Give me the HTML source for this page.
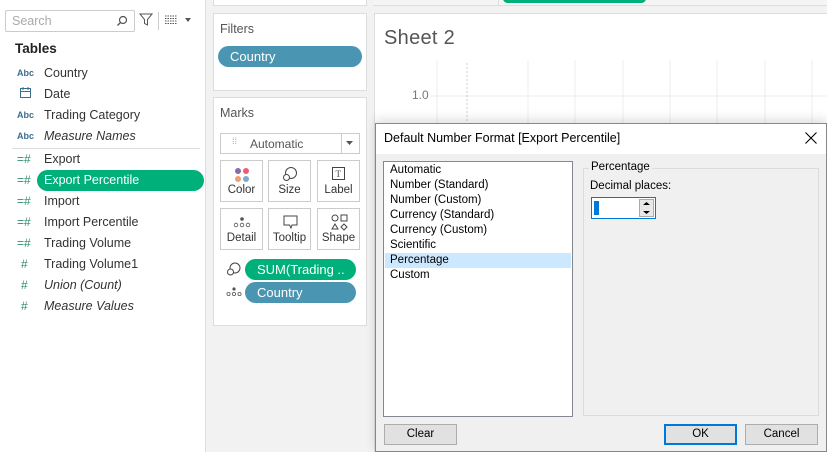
<!DOCTYPE html><html><head><style>
*{box-sizing:border-box;margin:0;padding:0}
html{width:827px;height:452px;overflow:hidden}
body{width:827px;height:452px;overflow:hidden;background:#f2f2f2;font-family:"Liberation Sans",sans-serif;position:relative;font-size:12px;color:#333}
.a{position:absolute}
.card{position:absolute;background:#fff;border:1px solid #ddd}
.pill{position:absolute;border-radius:11px;color:#fff;font-size:13px;padding-left:12px;line-height:21px;height:21px}
.fld{position:absolute;left:44px;font-size:12.5px;color:#333}
.ic{position:absolute;left:17px;font-size:9px;color:#3a6e8f;font-weight:bold}
.hash{position:absolute;left:17px;color:#2e8b6f;font-size:12px}
.mb{position:absolute;width:43px;height:42px;background:#fff;border:1px solid #ccc;text-align:center;font-size:11.5px}
.mb span{position:absolute;bottom:5px;left:0;right:0}
.li{position:absolute;left:390px;font-size:11.5px;color:#000}
.btn{position:absolute;top:424px;height:21px;background:#e1e1e1;border:1px solid #adadad;font-size:11.5px;text-align:center;line-height:19px;color:#000}
</style></head><body>
<div class="a" style="left:0;top:0;width:206px;height:452px;background:#fff;border-right:1px solid #ddd"></div>
<div class="a" style="left:5px;top:10px;width:130px;height:22px;border:1px solid #ccc;border-radius:2px"></div>
<div class="a" style="left:12px;top:14px;color:#aaa;font-size:12.5px">Search</div>
<svg class="a" style="left:116px;top:15px" width="12" height="12"><circle cx="7" cy="5" r="3.5" fill="none" stroke="#555" stroke-width="1.2"/><path d="M4.5 7.5L1.5 10.5" stroke="#555" stroke-width="1.3"/></svg>
<svg class="a" style="left:139px;top:13px" width="14" height="14"><path d="M1 1H13L8.5 6.5V12L5.5 10.5V6.5Z" fill="none" stroke="#555"/></svg>
<div class="a" style="left:158px;top:12px;width:1px;height:18px;background:#ccc"></div>
<svg class="a" style="left:165px;top:15px" width="30" height="10"><path d="M0 1H12M0 3.5H12M0 6H12M0 8.5H12" stroke="#555" stroke-dasharray="1.5 1"/><path d="M20 3L26 3L23 7Z" fill="#555"/></svg>
<div class="a" style="left:15px;top:41px;font-weight:bold;font-size:13.5px;color:#222">Tables</div>
<div class="ic" style="top:68px">Abc</div><div class="fld" style="top:66px">Country</div>
<svg class="a" style="left:20px;top:87px" width="11" height="11"><rect x="0.5" y="1.5" width="10" height="9" fill="none" stroke="#3a6e8f"/><path d="M0.5 4.5H10.5M3 0V3M8 0V3" stroke="#3a6e8f"/></svg><div class="fld" style="top:87px">Date</div>
<div class="ic" style="top:110px">Abc</div><div class="fld" style="top:108px">Trading Category</div>
<div class="ic" style="top:131px">Abc</div><div class="fld" style="top:129px;font-style:italic">Measure Names</div>
<div class="a" style="left:12px;top:148px;width:188px;height:1px;background:#ddd"></div>
<div class="hash" style="top:152px">=#</div><div class="fld" style="top:152px">Export</div>
<div class="pill" style="left:37px;top:170px;width:167px;background:#00b07a;padding-left:7px;font-size:12.5px">Export Percentile</div><div class="hash" style="top:173px">=#</div>
<div class="hash" style="top:194px">=#</div><div class="fld" style="top:194px">Import</div>
<div class="hash" style="top:215px">=#</div><div class="fld" style="top:215px">Import Percentile</div>
<div class="hash" style="top:236px">=#</div><div class="fld" style="top:236px">Trading Volume</div>
<div class="hash" style="top:257px;left:21px">#</div><div class="fld" style="top:257px">Trading Volume1</div>
<div class="hash" style="top:278px;left:21px">#</div><div class="fld" style="top:278px;font-style:italic">Union (Count)</div>
<div class="hash" style="top:299px;left:21px">#</div><div class="fld" style="top:299px;font-style:italic">Measure Values</div>

<div class="card" style="left:213px;top:-2px;width:154px;height:8px"></div>
<div class="card" style="left:213px;top:13px;width:154px;height:78px"></div>
<div class="a" style="left:220px;top:22px;font-size:12.5px;color:#555">Filters</div>
<div class="pill" style="left:218px;top:46px;width:144px;background:#4a96b2">Country</div>
<div class="card" style="left:213px;top:97px;width:154px;height:229px"></div>
<div class="a" style="left:220px;top:106px;font-size:12.5px;color:#555">Marks</div>
<div class="a" style="left:220px;top:133px;width:140px;height:21px;border:1px solid #ccc;background:#fff"></div>
<div class="a" style="left:250px;top:137px;font-size:12px;color:#555">Automatic</div>
<div class="a" style="left:232px;top:136px;font-size:9px;color:#aaa">⁞⁞</div>
<div class="a" style="left:341px;top:134px;width:1px;height:19px;background:#ccc"></div>
<svg class="a" style="left:346px;top:141px" width="8" height="5"><path d="M0 0H7L3.5 4Z" fill="#555"/></svg>
<div class="mb" style="left:220px;top:160px"><svg class="a" style="left:13px;top:6px" width="16" height="16"><circle cx="4" cy="4" r="3" fill="#8e6aa5"/><circle cx="12" cy="4" r="3" fill="#e85f6f"/><circle cx="4" cy="12" r="3" fill="#f0a070"/><circle cx="12" cy="12" r="3" fill="#80a8d0"/></svg><span>Color</span></div>
<div class="mb" style="left:268px;top:160px"><svg class="a" style="left:13px;top:5px" width="16" height="16"><circle cx="9" cy="7" r="5.5" fill="none" stroke="#444"/><circle cx="4.5" cy="11.5" r="3" fill="#fff" stroke="#444"/></svg><span>Size</span></div>
<div class="mb" style="left:317px;top:160px"><svg class="a" style="left:14px;top:6px" width="14" height="14"><rect x="0.5" y="0.5" width="12" height="12" fill="none" stroke="#444"/><text x="3.5" y="10" font-size="9" font-family="Liberation Serif" fill="#444">T</text></svg><span>Label</span></div>
<div class="mb" style="left:220px;top:208px"><svg class="a" style="left:12px;top:7px" width="18" height="12"><circle cx="9" cy="3" r="1.8" fill="#555"/><circle cx="3" cy="9" r="1.8" fill="none" stroke="#555" stroke-width=".8"/><circle cx="9" cy="9" r="1.8" fill="none" stroke="#555" stroke-width=".8"/><circle cx="15" cy="9" r="1.8" fill="none" stroke="#555" stroke-width=".8"/></svg><span>Detail</span></div>
<div class="mb" style="left:268px;top:208px"><svg class="a" style="left:14px;top:6px" width="16" height="16"><path d="M1 1H14V10H9L8 13L6.5 10H1Z" fill="none" stroke="#444"/></svg><span>Tooltip</span></div>
<div class="mb" style="left:317px;top:208px"><svg class="a" style="left:13px;top:5px" width="17" height="17"><circle cx="4" cy="4" r="3" fill="none" stroke="#444"/><rect x="10" y="1" width="6" height="6" fill="none" stroke="#444"/><path d="M4 10L7 15H1Z" fill="none" stroke="#444"/><path d="M13 10L16 13L13 16L10 13Z" fill="none" stroke="#444"/></svg><span>Shape</span></div>
<svg class="a" style="left:226px;top:261px" width="16" height="16"><circle cx="9" cy="7" r="5" fill="none" stroke="#444"/><circle cx="4.5" cy="11" r="3" fill="#fff" stroke="#444"/></svg>
<div class="pill" style="left:245px;top:259px;width:111px;background:#00b07a">SUM(Trading ..</div>
<svg class="a" style="left:226px;top:287px" width="16" height="10"><circle cx="8" cy="2" r="1.6" fill="#555"/><circle cx="2.5" cy="7" r="1.6" fill="none" stroke="#555" stroke-width=".8"/><circle cx="8" cy="7" r="1.6" fill="none" stroke="#555" stroke-width=".8"/><circle cx="13.5" cy="7" r="1.6" fill="none" stroke="#555" stroke-width=".8"/></svg>
<div class="pill" style="left:245px;top:282px;width:111px;background:#4a96b2">Country</div>

<div class="a" style="left:373px;top:0;width:454px;height:6px;background:#f5f5f5;border-bottom:1px solid #ddd"></div>
<div class="a" style="left:498px;top:0;width:1px;height:6px;background:#ddd"></div>
<div class="a" style="left:503px;top:-6px;width:143px;height:9px;border-radius:5px;background:#00b07a"></div>
<div class="card" style="left:374px;top:13px;width:453px;height:439px;border-right:none;border-bottom:none"></div>
<div class="a" style="left:384px;top:27px;font-size:20px;color:#555;letter-spacing:.3px">Sheet 2</div>
<div class="a" style="left:412px;top:88px;font-size:12px;color:#777">1.0</div>
<svg class="a" style="left:430px;top:60px" width="397" height="70"><path d="M7 0V70M98 0V70M145 0V70M193 0V70M240 0V70M287 0V70M335 0V70M382 0V70" stroke="#eee"/><path d="M0 36H397" stroke="#eee"/><path d="M37 3V70" stroke="#ccc" stroke-dasharray="2 2"/></svg>

<div class="a" style="left:375px;top:123px;width:452px;height:329px;background:#f0f0f0;border:1px solid #888;box-shadow:0 -4px 10px rgba(0,0,0,.12)"></div>
<div class="a" style="left:376px;top:124px;width:450px;height:30px;background:#fff"></div>
<div class="a" style="left:384px;top:131px;font-size:12.5px;color:#000">Default Number Format [Export Percentile]</div>
<svg class="a" style="left:805px;top:132px" width="12" height="12"><path d="M0.5 0.5L11.5 11.5M11.5 0.5L0.5 11.5" stroke="#000" stroke-width="1.1"/></svg>
<div class="a" style="left:383px;top:161px;width:190px;height:256px;background:#fff;border:1px solid #828790"></div>
<div class="a" style="left:385px;top:253px;width:186px;height:15px;background:#cce8ff"></div>
<div class="li" style="top:164px">Automatic</div>
<div class="li" style="top:179px">Number (Standard)</div>
<div class="li" style="top:194px">Number (Custom)</div>
<div class="li" style="top:209px">Currency (Standard)</div>
<div class="li" style="top:224px">Currency (Custom)</div>
<div class="li" style="top:239px">Scientific</div>
<div class="li" style="top:254px">Percentage</div>
<div class="li" style="top:269px">Custom</div>
<div class="a" style="left:583px;top:168px;width:236px;height:248px;border:1px solid #dcdcdc"></div>
<div class="a" style="left:589px;top:161px;background:#f0f0f0;padding:0 2px;font-size:11.5px;color:#000">Percentage</div>
<div class="a" style="left:590px;top:180px;font-size:11.5px;color:#000">Decimal places:</div>
<div class="a" style="left:591px;top:197px;width:65px;height:22px;border:1px solid #0078d7;background:#fff"></div>
<div class="a" style="left:594px;top:201px;width:5px;height:14px;background:#0078d7"></div>
<div class="a" style="left:639px;top:199px;width:15px;height:18px;border:1px solid #aaa;background:#e8e8e8"></div>
<svg class="a" style="left:643px;top:201px" width="7" height="14"><path d="M0 4L3.5 1L7 4ZM0 10L3.5 13L7 10Z" fill="#000"/></svg>
<div class="btn" style="left:384px;width:73px">Clear</div>
<div class="btn" style="left:664px;width:73px;border:2px solid #0078d7;line-height:17px">OK</div>
<div class="btn" style="left:745px;width:73px">Cancel</div>
</body></html>
